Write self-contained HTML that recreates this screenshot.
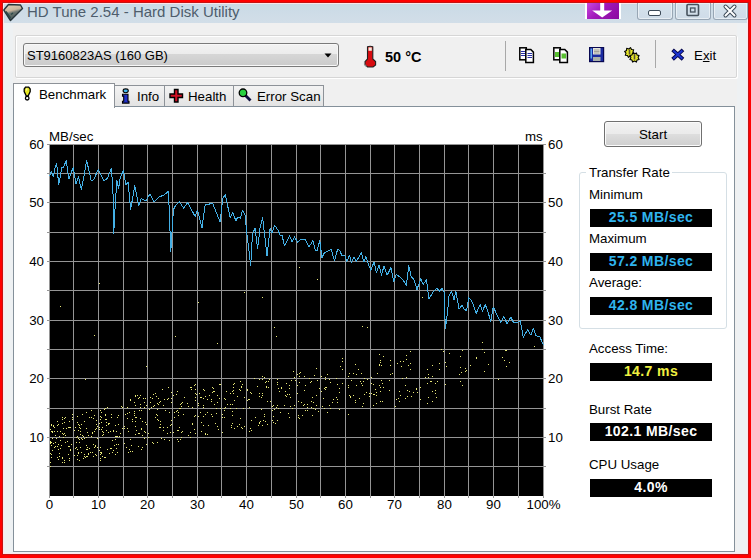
<!DOCTYPE html>
<html><head><meta charset="utf-8">
<style>
*{margin:0;padding:0;box-sizing:border-box}
html,body{width:751px;height:558px;overflow:hidden;background:#f00}
body{position:relative;font-family:"Liberation Sans",sans-serif;color:#000}
.a{position:absolute}
.t{white-space:nowrap;line-height:1}
#win{left:3px;top:3px;width:745px;height:551px;background:#eef1f3;box-shadow:inset 0 0 0 1px #ffe4ea,0 0 0 1px #c41414}
#title{left:4px;top:4px;width:743px;height:19px;background:linear-gradient(#cadae6,#d2dee8)}
#body{left:13px;top:23px;width:724px;height:529px;background:#f0f0f0}
#panel{left:13px;top:106px;width:722px;height:446px;background:#fff;border:1px solid #84909a}
.blk{background:#000;color:#fff;font-weight:bold;font-size:14px;letter-spacing:0.4px;text-align:center;line-height:16px;height:18px;width:122px;left:590px}
.lbl{font-size:13.3px;left:589px}
.ax{font-size:13.3px}
.tb{position:absolute;top:3px;height:17px;border:1px solid #98a6b4;border-top:none;border-radius:0 0 3px 3px;background:linear-gradient(#d6e2ec,#cfdce8);box-shadow:inset 0 0 0 1px rgba(255,255,255,.5)}
.tab{position:absolute;top:85px;height:21px;border:1px solid #8d9298;border-bottom:none;background:linear-gradient(#f3f3f3,#e3e3e3)}
</style></head><body>
<div id="win" class="a"></div>
<div id="title" class="a"></div>
<!-- app icon -->
<svg class="a" style="left:2px;top:2px" width="22" height="22" viewBox="0 0 22 22">
<defs><linearGradient id="ai" x1="0" y1="0" x2="0.3" y2="1"><stop offset="0" stop-color="#e8d2b8"/><stop offset=".45" stop-color="#c8b49c"/><stop offset=".6" stop-color="#6a7470"/><stop offset="1" stop-color="#4a5a5a"/></linearGradient></defs>
<polygon points="6.5,2.5 18.5,3 20.5,6.5 8.5,18.5 1.8,8" fill="url(#ai)" stroke="#26343a" stroke-width="1.4" stroke-linejoin="round"/>
<path d="M4 9.5l4.5 6.5M9 12.5l2 -1.5" stroke="#2c4a4a" stroke-width="1.4"/>
</svg>
<div class="a t" style="left:27px;top:4px;font-size:15px;color:#4e5d6c">HD Tune 2.54 - Hard Disk Utility</div>
<!-- purple button -->
<div class="a" style="left:585px;top:3px;width:36px;height:16px;background:#fff"></div>
<div class="a" style="left:587px;top:3px;width:32px;height:16px;background:linear-gradient(135deg,#c848e0,#a018b8 45%,#8a0aa0)"></div>
<svg class="a" style="left:587px;top:3px" width="32" height="16"><path d="M13.2 0h4v7.5h8l-10 7-10-7h8z" fill="#fff"/></svg>
<div class="tb" style="left:637px;width:36px"></div>
<div class="tb" style="left:675px;width:36px"></div>
<div class="tb" style="left:713px;width:35px"></div>
<svg class="a" style="left:637px;top:3px" width="111" height="17">
<rect x="11.5" y="7.5" width="12" height="5" rx="1.5" fill="#fff" stroke="#3c4a58"/>
<rect x="50" y="1.5" width="11.5" height="11" rx="1" fill="none" stroke="#46525e" stroke-width="1.6"/>
<rect x="53.5" y="5" width="4.5" height="4" fill="none" stroke="#46525e" stroke-width="1.3"/>
<path d="M88.5 3.5l9 9M97.5 3.5l-9 9" stroke="#3c4a58" stroke-width="4" stroke-linecap="round"/>
<path d="M88.5 3.5l9 9M97.5 3.5l-9 9" stroke="#fff" stroke-width="2" stroke-linecap="round"/>
</svg>
<div id="body" class="a"></div>
<!-- toolbar container -->
<div class="a" style="left:15px;top:35px;width:722px;height:43px;border:1px solid #d6d6d6;border-radius:2px;box-shadow:inset 1px 1px 0 #fff,1px 1px 0 #fff;background:#f0f0f0"></div>
<!-- combo -->
<div class="a" style="left:23px;top:43px;width:316px;height:24px;border:1px solid #7a7a7a;border-radius:3px;background:linear-gradient(#f2f2f2 0%,#ececec 45%,#d6d6d6 47%,#cbcbcb 100%);box-shadow:inset 0 0 0 1px #f8f8f8"></div>
<div class="a t" style="left:27px;top:49px;font-size:13px">ST9160823AS (160 GB)</div>
<svg class="a" style="left:324px;top:53px" width="10" height="6"><path d="M0.5 0.5h7l-3.5 4z" fill="#000"/></svg>
<!-- thermometer -->
<svg class="a" style="left:362px;top:45px" width="16" height="23" viewBox="0 0 16 23">
<path d="M5.5 1.8q2.7-1 5.3 0v12.2l2.8 2.6v3.4l-2.5 2h-5.6l-2.5-2.3v-3.1l2.5-2.6z" fill="#d80c10" stroke="#202020" stroke-width="1.1"/>
<path d="M6.5 2.4h3.3v3.4h-3.3z" fill="#f4ece0"/>
<path d="M2.5 16.5v3l2 2" stroke="#888" stroke-width="1.1" fill="none"/>
</svg>
<div class="a t" style="left:385px;top:50px;font-size:14.5px;font-weight:bold">50 °C</div>
<div class="a" style="left:505px;top:41px;width:1px;height:30px;background:#a8a8a8"></div>
<div class="a" style="left:655px;top:40px;width:1px;height:28px;background:#a8a8a8"></div>
<!-- copy icons -->
<svg class="a" style="left:516px;top:44px" width="128" height="22">
<g stroke="#000" stroke-width="1.5">
<rect x="3.8" y="3.8" width="6.5" height="12" fill="#fff"/>
<path d="M9.8 5.5h5l2.6 2.6v10.5h-7.6z" fill="#fff"/>
</g>
<path d="M5 7.5h4M5 9.5h4M5 11.5h4M11.5 9.5h4.5M11.5 11.5h4.5M11.5 13.5h4.5" stroke="#2830a8" stroke-width="1.1"/>
<g transform="translate(34,0)">
<g stroke="#000" stroke-width="1.5">
<rect x="3.8" y="3.8" width="6.5" height="12" fill="#fff"/>
<path d="M9.8 5.5h5l2.6 2.6v10.5h-7.6z" fill="#fff"/>
</g>
<rect x="5" y="8" width="4" height="5" fill="#58c030"/>
<rect x="11.5" y="9.5" width="4.5" height="5" fill="#58c030"/>
</g>
<g transform="translate(73,3)">
<rect x="0.6" y="0.6" width="14" height="14" fill="#1a2aa0" stroke="#080850" stroke-width="1.2"/>
<rect x="1.5" y="1.5" width="1.5" height="10" fill="#5aa8f0"/>
<rect x="4" y="1" width="7.5" height="6.5" fill="#e4e4dc"/>
<path d="M5 3h5.5M5 4.5h5.5M5 6h5.5" stroke="#909088" stroke-width=".8"/>
<rect x="4" y="10" width="7.5" height="4" fill="#a8b0a8"/>
</g>
<g transform="translate(107,3)">
<polygon points="11.4,6.5 9.5,7.5 9.3,9.7 7.2,9.0 5.5,10.4 4.5,8.5 2.3,8.3 3.0,6.2 1.6,4.5 3.5,3.5 3.7,1.3 5.8,2.0 7.5,0.6 8.5,2.5 10.7,2.7 10.0,4.8" fill="#e6e628" stroke="#000" stroke-width="1.1" stroke-linejoin="round"/>
<polygon points="16.1,12.4 14.0,13.1 13.4,15.1 11.5,14.1 9.6,15.1 8.9,13.0 6.9,12.4 7.9,10.5 6.9,8.6 9.0,7.9 9.6,5.9 11.5,6.9 13.4,5.9 14.1,8.0 16.1,8.6 15.1,10.5" fill="#e6e628" stroke="#000" stroke-width="1.1" stroke-linejoin="round"/>
<path d="M6.5 2.5v5M11.5 7.5v5" stroke="#5a5038" stroke-width="1.6"/>
</g>
</svg>
<!-- exit X -->
<svg class="a" style="left:670px;top:47px" width="16" height="14">
<path d="M4 4.2l7.6 6.8M11.6 4.2l-7.6 6.8" stroke="#06064a" stroke-width="3.8" stroke-linecap="square"/>
<path d="M4 4.2l7.6 6.8M11.6 4.2l-7.6 6.8" stroke="#1c34d0" stroke-width="2" stroke-linecap="square"/>
</svg>
<div class="a t" style="left:694px;top:49px;font-size:13.3px">E<u>x</u>it</div>

<!-- panel + tabs -->
<div id="panel" class="a"></div>
<div class="tab" style="left:114px;width:51px"></div>
<div class="tab" style="left:164px;width:70px"></div>
<div class="tab" style="left:233px;width:91px"></div>
<div class="a" style="left:13px;top:83px;width:102px;height:25px;background:#fff;border:1px solid #8d9298;border-bottom:none"></div>
<svg class="a" style="left:18px;top:84px" width="20" height="20">
<path d="M7.5 3.2h3.2l1.5 1.8v2.5l-2 4.3h-2l-2-4.3v-2.5z" fill="#e8e820" stroke="#000" stroke-width="1.3"/>
<path d="M8.2 4.5h1.2l-.6 3z" fill="#fff"/>
<circle cx="9.2" cy="14.2" r="1.8" fill="#fff" stroke="#000" stroke-width="1.3"/>
</svg>
<div class="a t" style="left:39px;top:88px;font-size:13.3px">Benchmark</div>
<svg class="a" style="left:118px;top:86px" width="16" height="18">
<ellipse cx="7.7" cy="4.8" rx="2.6" ry="1.9" fill="#40b8f0" stroke="#000" stroke-width="1.1"/>
<path d="M4.5 8.3h5.5v7h1v1.8h-6.5v-1.8h1.2v-5.2h-1.2z" fill="#2030c8" stroke="#000" stroke-width="1.1"/>
</svg>
<div class="a t" style="left:137px;top:90px;font-size:13.3px">Info</div>
<svg class="a" style="left:166px;top:86px" width="20" height="18">
<path d="M8.5 3.5h3.5v4.5h4.5v3.5h-4.5v4.5h-3.5v-4.5h-4.5v-3.5h4.5z" fill="#d01024" stroke="#000" stroke-width="1.4"/>
</svg>
<div class="a t" style="left:188px;top:90px;font-size:13.3px">Health</div>
<svg class="a" style="left:236px;top:86px" width="20" height="18">
<path d="M9.5 9.5l5 5" stroke="#101040" stroke-width="2.8"/>
<circle cx="7" cy="6.8" r="3.8" fill="#28d040" stroke="#000" stroke-width="1.3"/>
</svg>
<div class="a t" style="left:257px;top:90px;font-size:13.3px">Error Scan</div>

<!-- start button -->
<div class="a" style="left:604px;top:121px;width:98px;height:26px;border:1px solid #707070;border-radius:3px;background:linear-gradient(#f2f2f2 0%,#ebebeb 48%,#dddddd 52%,#cfcfcf 100%);box-shadow:inset 0 0 0 1px #fbfbfb"></div>
<div class="a t" style="left:639px;top:127.5px;font-size:13.3px">Start</div>
<!-- group box -->
<div class="a" style="left:579px;top:172px;width:148px;height:157px;border:1px solid #d5dfe5;border-radius:3px"></div>
<div class="a" style="left:586px;top:165px;width:86px;height:14px;background:#fff"></div>

<div class="a lbl t" style="top:165.5px">Transfer Rate</div>
<div class="a lbl t" style="top:188px">Minimum</div>
<div class="a blk t" style="top:209px;color:#2fb4ee">25.5 MB/sec</div>
<div class="a lbl t" style="top:232px">Maximum</div>
<div class="a blk t" style="top:253px;color:#2fb4ee">57.2 MB/sec</div>
<div class="a lbl t" style="top:276px">Average:</div>
<div class="a blk t" style="top:297px;color:#2fb4ee">42.8 MB/sec</div>
<div class="a lbl t" style="top:342px">Access Time:</div>
<div class="a blk t" style="top:363px;color:#f0f040">14.7 ms</div>
<div class="a lbl t" style="top:403px">Burst Rate</div>
<div class="a blk t" style="top:423px">102.1 MB/sec</div>
<div class="a lbl t" style="top:458px">CPU Usage</div>
<div class="a blk t" style="top:479px">4.0%</div>

<!-- axis labels -->
<div class="a ax t" style="left:49px;top:130px">MB/sec</div>
<div class="a ax t" style="left:525px;top:130px">ms</div>
<div class="a ax t" style="right:707px;top:137.5px;text-align:right">60</div>
<div class="a ax t" style="left:548px;top:137.5px">60</div>
<div class="a ax t" style="right:707px;top:195.5px;text-align:right">50</div>
<div class="a ax t" style="left:548px;top:195.5px">50</div>
<div class="a ax t" style="right:707px;top:254.5px;text-align:right">40</div>
<div class="a ax t" style="left:548px;top:254.5px">40</div>
<div class="a ax t" style="right:707px;top:313.5px;text-align:right">30</div>
<div class="a ax t" style="left:548px;top:313.5px">30</div>
<div class="a ax t" style="right:707px;top:371.5px;text-align:right">20</div>
<div class="a ax t" style="left:548px;top:371.5px">20</div>
<div class="a ax t" style="right:707px;top:430.5px;text-align:right">10</div>
<div class="a ax t" style="left:548px;top:430.5px">10</div>
<div class="a ax t" style="left:-50.5px;width:200px;text-align:center;top:498px">0</div>
<div class="a ax t" style="left:-1.5px;width:200px;text-align:center;top:498px">10</div>
<div class="a ax t" style="left:47.5px;width:200px;text-align:center;top:498px">20</div>
<div class="a ax t" style="left:97.5px;width:200px;text-align:center;top:498px">30</div>
<div class="a ax t" style="left:146.5px;width:200px;text-align:center;top:498px">40</div>
<div class="a ax t" style="left:196.5px;width:200px;text-align:center;top:498px">50</div>
<div class="a ax t" style="left:245.5px;width:200px;text-align:center;top:498px">60</div>
<div class="a ax t" style="left:294.5px;width:200px;text-align:center;top:498px">70</div>
<div class="a ax t" style="left:344.5px;width:200px;text-align:center;top:498px">80</div>
<div class="a ax t" style="left:393.5px;width:200px;text-align:center;top:498px">90</div>
<div class="a ax t" style="left:443.5px;width:200px;text-align:center;top:498px">100%</div>
<svg class="a" style="left:0;top:0" width="751" height="558" shape-rendering="crispEdges">
<rect x="50" y="145" width="493" height="351" fill="#000"/>
<path d="M73.5 144V498M98.5 144V498M123.5 144V498M147.5 144V498M172.5 144V498M197.5 144V498M221.5 144V498M246.5 144V498M271.5 144V498M296.5 144V498M320.5 144V498M345.5 144V498M370.5 144V498M394.5 144V498M419.5 144V498M444.5 144V498M468.5 144V498M493.5 144V498M518.5 144V498M47 173.5H546M47 202.5H546M47 232.5H546M47 261.5H546M47 290.5H546M47 320.5H546M47 349.5H546M47 378.5H546M47 408.5H546M47 437.5H546M47 466.5H546M49.5 144V498M543.5 144V498M47 144.5H546" stroke="#959595" stroke-width="1" fill="none"/>
<path d="M50 429h1v1h-1zM50 441h1v1h-1zM50 442h1v1h-1zM50 443h1v1h-1zM50 453h1v1h-1zM50 462h1v1h-1zM50 466h1v1h-1zM51 424h1v1h-1zM51 425h1v1h-1zM51 431h1v1h-1zM51 442h1v1h-1zM51 445h1v1h-1zM51 454h1v1h-1zM51 457h1v1h-1zM52 431h1v1h-1zM52 432h1v1h-1zM52 438h1v1h-1zM52 450h1v1h-1zM53 425h1v1h-1zM53 426h1v1h-1zM53 443h1v1h-1zM54 427h1v1h-1zM54 431h1v1h-1zM54 447h1v1h-1zM55 435h1v1h-1zM55 442h1v1h-1zM55 446h1v1h-1zM56 438h1v1h-1zM57 421h1v1h-1zM57 425h1v1h-1zM57 431h1v1h-1zM57 446h1v1h-1zM57 457h1v1h-1zM58 424h1v1h-1zM58 444h1v1h-1zM58 449h1v1h-1zM58 459h1v1h-1zM59 436h1v1h-1zM59 453h1v1h-1zM59 456h1v1h-1zM60 306h1v1h-1zM60 431h1v1h-1zM60 440h1v1h-1zM60 448h1v1h-1zM61 445h1v1h-1zM62 417h1v1h-1zM62 419h1v1h-1zM62 423h1v1h-1zM62 433h1v1h-1zM62 457h1v1h-1zM62 458h1v1h-1zM62 462h1v1h-1zM63 428h1v1h-1zM63 434h1v1h-1zM63 437h1v1h-1zM64 418h1v1h-1zM64 422h1v1h-1zM64 433h1v1h-1zM64 460h1v1h-1zM64 462h1v1h-1zM65 417h1v1h-1zM65 435h1v1h-1zM65 442h1v1h-1zM66 428h1v1h-1zM67 441h1v1h-1zM68 427h1v1h-1zM68 446h1v1h-1zM68 454h1v1h-1zM69 421h1v1h-1zM69 427h1v1h-1zM69 446h1v1h-1zM69 458h1v1h-1zM69 460h1v1h-1zM70 427h1v1h-1zM70 449h1v1h-1zM70 450h1v1h-1zM71 444h1v1h-1zM72 414h1v1h-1zM72 417h1v1h-1zM72 419h1v1h-1zM74 430h1v1h-1zM74 455h1v1h-1zM75 427h1v1h-1zM75 448h1v1h-1zM76 437h1v1h-1zM76 442h1v1h-1zM76 447h1v1h-1zM77 416h1v1h-1zM77 422h1v1h-1zM77 436h1v1h-1zM77 449h1v1h-1zM77 455h1v1h-1zM77 459h1v1h-1zM78 424h1v1h-1zM78 430h1v1h-1zM78 438h1v1h-1zM78 452h1v1h-1zM78 453h1v1h-1zM79 425h1v1h-1zM79 427h1v1h-1zM79 439h1v1h-1zM79 442h1v1h-1zM79 460h1v1h-1zM80 428h1v1h-1zM80 431h1v1h-1zM80 434h1v1h-1zM80 447h1v1h-1zM81 424h1v1h-1zM81 438h1v1h-1zM81 452h1v1h-1zM82 414h1v1h-1zM82 435h1v1h-1zM82 439h1v1h-1zM83 436h1v1h-1zM83 458h1v1h-1zM84 421h1v1h-1zM84 438h1v1h-1zM84 454h1v1h-1zM84 456h1v1h-1zM85 379h1v1h-1zM85 457h1v1h-1zM86 412h1v1h-1zM86 428h1v1h-1zM86 437h1v1h-1zM86 445h1v1h-1zM86 449h1v1h-1zM86 456h1v1h-1zM87 432h1v1h-1zM87 447h1v1h-1zM87 449h1v1h-1zM87 456h1v1h-1zM88 435h1v1h-1zM88 453h1v1h-1zM88 454h1v1h-1zM89 417h1v1h-1zM89 448h1v1h-1zM90 452h1v1h-1zM91 410h1v1h-1zM91 417h1v1h-1zM91 436h1v1h-1zM92 432h1v1h-1zM92 433h1v1h-1zM92 452h1v1h-1zM93 418h1v1h-1zM93 444h1v1h-1zM93 456h1v1h-1zM94 335h1v1h-1zM94 415h1v1h-1zM94 431h1v1h-1zM94 447h1v1h-1zM95 429h1v1h-1zM95 445h1v1h-1zM95 446h1v1h-1zM95 454h1v1h-1zM96 420h1v1h-1zM96 424h1v1h-1zM96 428h1v1h-1zM96 455h1v1h-1zM97 426h1v1h-1zM97 438h1v1h-1zM97 447h1v1h-1zM99 283h1v1h-1zM99 423h1v1h-1zM99 427h1v1h-1zM99 429h1v1h-1zM99 450h1v1h-1zM100 410h1v1h-1zM100 416h1v1h-1zM100 419h1v1h-1zM100 447h1v1h-1zM100 452h1v1h-1zM100 454h1v1h-1zM100 458h1v1h-1zM100 460h1v1h-1zM101 412h1v1h-1zM101 417h1v1h-1zM101 422h1v1h-1zM101 429h1v1h-1zM101 452h1v1h-1zM101 453h1v1h-1zM102 427h1v1h-1zM102 431h1v1h-1zM102 435h1v1h-1zM102 456h1v1h-1zM103 432h1v1h-1zM103 434h1v1h-1zM104 409h1v1h-1zM104 457h1v1h-1zM105 408h1v1h-1zM105 414h1v1h-1zM105 415h1v1h-1zM105 419h1v1h-1zM105 457h1v1h-1zM106 419h1v1h-1zM106 422h1v1h-1zM106 425h1v1h-1zM106 430h1v1h-1zM107 407h1v1h-1zM107 449h1v1h-1zM108 423h1v1h-1zM108 424h1v1h-1zM108 432h1v1h-1zM109 423h1v1h-1zM109 453h1v1h-1zM110 431h1v1h-1zM110 448h1v1h-1zM111 414h1v1h-1zM111 417h1v1h-1zM111 448h1v1h-1zM112 440h1v1h-1zM112 452h1v1h-1zM113 430h1v1h-1zM113 431h1v1h-1zM113 450h1v1h-1zM114 445h1v1h-1zM115 425h1v1h-1zM115 436h1v1h-1zM115 439h1v1h-1zM115 454h1v1h-1zM116 431h1v1h-1zM116 436h1v1h-1zM116 444h1v1h-1zM116 448h1v1h-1zM117 417h1v1h-1zM117 436h1v1h-1zM117 452h1v1h-1zM118 415h1v1h-1zM118 424h1v1h-1zM118 444h1v1h-1zM119 436h1v1h-1zM120 433h1v1h-1zM121 406h1v1h-1zM122 407h1v1h-1zM122 428h1v1h-1zM124 426h1v1h-1zM124 428h1v1h-1zM124 443h1v1h-1zM125 414h1v1h-1zM126 447h1v1h-1zM127 407h1v1h-1zM127 413h1v1h-1zM127 418h1v1h-1zM127 428h1v1h-1zM128 431h1v1h-1zM128 452h1v1h-1zM129 412h1v1h-1zM129 449h1v1h-1zM130 399h1v1h-1zM130 400h1v1h-1zM130 439h1v1h-1zM130 451h1v1h-1zM131 445h1v1h-1zM132 419h1v1h-1zM132 421h1v1h-1zM132 451h1v1h-1zM134 402h1v1h-1zM134 411h1v1h-1zM134 413h1v1h-1zM134 415h1v1h-1zM135 395h1v1h-1zM135 396h1v1h-1zM135 405h1v1h-1zM135 417h1v1h-1zM135 421h1v1h-1zM135 426h1v1h-1zM135 434h1v1h-1zM136 417h1v1h-1zM136 430h1v1h-1zM137 395h1v1h-1zM138 398h1v1h-1zM138 433h1v1h-1zM138 446h1v1h-1zM139 397h1v1h-1zM139 410h1v1h-1zM139 433h1v1h-1zM140 395h1v1h-1zM140 404h1v1h-1zM140 407h1v1h-1zM140 418h1v1h-1zM141 410h1v1h-1zM141 428h1v1h-1zM141 429h1v1h-1zM141 449h1v1h-1zM142 421h1v1h-1zM142 435h1v1h-1zM142 447h1v1h-1zM143 398h1v1h-1zM144 402h1v1h-1zM144 407h1v1h-1zM144 431h1v1h-1zM144 438h1v1h-1zM145 398h1v1h-1zM145 422h1v1h-1zM145 432h1v1h-1zM146 366h1v1h-1zM146 405h1v1h-1zM146 424h1v1h-1zM146 444h1v1h-1zM148 433h1v1h-1zM148 437h1v1h-1zM149 409h1v1h-1zM150 397h1v1h-1zM150 402h1v1h-1zM151 407h1v1h-1zM152 398h1v1h-1zM152 442h1v1h-1zM153 394h1v1h-1zM153 406h1v1h-1zM153 443h1v1h-1zM154 405h1v1h-1zM155 393h1v1h-1zM155 417h1v1h-1zM156 396h1v1h-1zM156 414h1v1h-1zM157 403h1v1h-1zM157 409h1v1h-1zM157 415h1v1h-1zM157 419h1v1h-1zM157 442h1v1h-1zM158 398h1v1h-1zM158 404h1v1h-1zM158 420h1v1h-1zM159 402h1v1h-1zM159 427h1v1h-1zM160 401h1v1h-1zM160 421h1v1h-1zM160 424h1v1h-1zM160 427h1v1h-1zM161 438h1v1h-1zM162 389h1v1h-1zM163 405h1v1h-1zM163 427h1v1h-1zM163 430h1v1h-1zM164 399h1v1h-1zM164 439h1v1h-1zM165 410h1v1h-1zM167 399h1v1h-1zM167 427h1v1h-1zM167 433h1v1h-1zM168 387h1v1h-1zM168 398h1v1h-1zM169 412h1v1h-1zM169 440h1v1h-1zM170 425h1v1h-1zM170 432h1v1h-1zM171 392h1v1h-1zM171 398h1v1h-1zM171 402h1v1h-1zM171 420h1v1h-1zM171 424h1v1h-1zM173 395h1v1h-1zM173 432h1v1h-1zM174 412h1v1h-1zM174 417h1v1h-1zM175 336h1v1h-1zM176 394h1v1h-1zM176 411h1v1h-1zM177 391h1v1h-1zM177 410h1v1h-1zM177 430h1v1h-1zM177 439h1v1h-1zM178 412h1v1h-1zM178 415h1v1h-1zM178 430h1v1h-1zM178 441h1v1h-1zM179 408h1v1h-1zM179 427h1v1h-1zM180 404h1v1h-1zM180 408h1v1h-1zM180 439h1v1h-1zM181 403h1v1h-1zM181 406h1v1h-1zM181 432h1v1h-1zM181 437h1v1h-1zM182 402h1v1h-1zM182 431h1v1h-1zM183 414h1v1h-1zM184 397h1v1h-1zM187 403h1v1h-1zM188 406h1v1h-1zM188 435h1v1h-1zM190 387h1v1h-1zM190 432h1v1h-1zM190 437h1v1h-1zM191 387h1v1h-1zM191 389h1v1h-1zM192 407h1v1h-1zM192 423h1v1h-1zM192 424h1v1h-1zM194 385h1v1h-1zM194 416h1v1h-1zM194 429h1v1h-1zM195 384h1v1h-1zM195 389h1v1h-1zM195 393h1v1h-1zM195 397h1v1h-1zM195 400h1v1h-1zM195 415h1v1h-1zM195 433h1v1h-1zM196 394h1v1h-1zM198 302h1v1h-1zM198 403h1v1h-1zM198 405h1v1h-1zM198 416h1v1h-1zM199 393h1v1h-1zM200 397h1v1h-1zM200 412h1v1h-1zM201 397h1v1h-1zM201 422h1v1h-1zM201 431h1v1h-1zM203 389h1v1h-1zM203 398h1v1h-1zM203 405h1v1h-1zM203 407h1v1h-1zM203 416h1v1h-1zM203 425h1v1h-1zM204 390h1v1h-1zM205 396h1v1h-1zM205 414h1v1h-1zM205 433h1v1h-1zM205 434h1v1h-1zM207 399h1v1h-1zM207 412h1v1h-1zM207 434h1v1h-1zM208 425h1v1h-1zM209 395h1v1h-1zM211 399h1v1h-1zM211 401h1v1h-1zM211 414h1v1h-1zM212 387h1v1h-1zM212 392h1v1h-1zM212 416h1v1h-1zM213 388h1v1h-1zM213 391h1v1h-1zM214 391h1v1h-1zM214 404h1v1h-1zM215 423h1v1h-1zM216 408h1v1h-1zM216 413h1v1h-1zM217 343h1v1h-1zM217 395h1v1h-1zM217 402h1v1h-1zM217 426h1v1h-1zM218 429h1v1h-1zM219 384h1v1h-1zM219 398h1v1h-1zM220 384h1v1h-1zM220 408h1v1h-1zM222 414h1v1h-1zM222 417h1v1h-1zM222 432h1v1h-1zM224 398h1v1h-1zM224 408h1v1h-1zM224 410h1v1h-1zM224 417h1v1h-1zM225 399h1v1h-1zM225 407h1v1h-1zM226 391h1v1h-1zM227 404h1v1h-1zM230 393h1v1h-1zM230 404h1v1h-1zM230 408h1v1h-1zM231 425h1v1h-1zM231 427h1v1h-1zM232 391h1v1h-1zM232 404h1v1h-1zM232 411h1v1h-1zM232 415h1v1h-1zM232 423h1v1h-1zM233 384h1v1h-1zM233 387h1v1h-1zM233 390h1v1h-1zM233 393h1v1h-1zM234 383h1v1h-1zM234 400h1v1h-1zM234 428h1v1h-1zM236 408h1v1h-1zM237 396h1v1h-1zM237 426h1v1h-1zM239 389h1v1h-1zM239 424h1v1h-1zM240 381h1v1h-1zM240 390h1v1h-1zM240 418h1v1h-1zM241 386h1v1h-1zM241 387h1v1h-1zM241 427h1v1h-1zM242 384h1v1h-1zM242 428h1v1h-1zM243 408h1v1h-1zM244 292h1v1h-1zM244 397h1v1h-1zM244 426h1v1h-1zM247 389h1v1h-1zM247 390h1v1h-1zM247 400h1v1h-1zM248 399h1v1h-1zM249 399h1v1h-1zM249 407h1v1h-1zM249 431h1v1h-1zM250 392h1v1h-1zM250 428h1v1h-1zM251 393h1v1h-1zM251 420h1v1h-1zM251 430h1v1h-1zM254 378h1v1h-1zM255 417h1v1h-1zM257 386h1v1h-1zM258 425h1v1h-1zM259 379h1v1h-1zM259 393h1v1h-1zM259 396h1v1h-1zM259 422h1v1h-1zM259 423h1v1h-1zM260 421h1v1h-1zM261 397h1v1h-1zM261 409h1v1h-1zM262 297h1v1h-1zM262 376h1v1h-1zM262 379h1v1h-1zM262 393h1v1h-1zM262 395h1v1h-1zM262 425h1v1h-1zM263 420h1v1h-1zM264 377h1v1h-1zM264 414h1v1h-1zM264 416h1v1h-1zM265 382h1v1h-1zM265 421h1v1h-1zM266 381h1v1h-1zM266 386h1v1h-1zM266 387h1v1h-1zM267 401h1v1h-1zM267 424h1v1h-1zM268 381h1v1h-1zM268 387h1v1h-1zM269 379h1v1h-1zM270 401h1v1h-1zM272 406h1v1h-1zM272 410h1v1h-1zM272 420h1v1h-1zM273 405h1v1h-1zM273 416h1v1h-1zM273 422h1v1h-1zM274 327h1v1h-1zM274 409h1v1h-1zM275 423h1v1h-1zM276 336h1v1h-1zM276 407h1v1h-1zM277 379h1v1h-1zM277 382h1v1h-1zM277 384h1v1h-1zM277 405h1v1h-1zM277 420h1v1h-1zM278 388h1v1h-1zM278 408h1v1h-1zM279 391h1v1h-1zM280 412h1v1h-1zM281 387h1v1h-1zM281 388h1v1h-1zM284 405h1v1h-1zM285 391h1v1h-1zM285 395h1v1h-1zM286 383h1v1h-1zM286 396h1v1h-1zM287 394h1v1h-1zM288 413h1v1h-1zM289 385h1v1h-1zM289 388h1v1h-1zM289 394h1v1h-1zM289 417h1v1h-1zM290 397h1v1h-1zM290 406h1v1h-1zM291 380h1v1h-1zM292 408h1v1h-1zM293 371h1v1h-1zM294 377h1v1h-1zM294 405h1v1h-1zM295 380h1v1h-1zM297 374h1v1h-1zM297 385h1v1h-1zM297 393h1v1h-1zM298 401h1v1h-1zM298 415h1v1h-1zM298 417h1v1h-1zM299 267h1v1h-1zM299 373h1v1h-1zM299 376h1v1h-1zM299 382h1v1h-1zM299 418h1v1h-1zM300 372h1v1h-1zM301 402h1v1h-1zM302 415h1v1h-1zM303 405h1v1h-1zM304 376h1v1h-1zM304 390h1v1h-1zM304 404h1v1h-1zM305 385h1v1h-1zM305 410h1v1h-1zM307 404h1v1h-1zM307 407h1v1h-1zM307 410h1v1h-1zM309 378h1v1h-1zM310 382h1v1h-1zM311 381h1v1h-1zM311 401h1v1h-1zM311 407h1v1h-1zM312 397h1v1h-1zM312 415h1v1h-1zM313 402h1v1h-1zM313 408h1v1h-1zM314 375h1v1h-1zM315 409h1v1h-1zM316 368h1v1h-1zM316 395h1v1h-1zM316 405h1v1h-1zM317 279h1v1h-1zM317 380h1v1h-1zM318 411h1v1h-1zM319 388h1v1h-1zM321 376h1v1h-1zM321 391h1v1h-1zM322 406h1v1h-1zM323 398h1v1h-1zM324 388h1v1h-1zM324 408h1v1h-1zM325 377h1v1h-1zM325 379h1v1h-1zM325 387h1v1h-1zM325 389h1v1h-1zM326 387h1v1h-1zM327 374h1v1h-1zM327 412h1v1h-1zM329 379h1v1h-1zM329 405h1v1h-1zM330 382h1v1h-1zM330 408h1v1h-1zM332 402h1v1h-1zM333 399h1v1h-1zM336 378h1v1h-1zM336 397h1v1h-1zM337 384h1v1h-1zM337 399h1v1h-1zM337 402h1v1h-1zM339 388h1v1h-1zM339 392h1v1h-1zM339 409h1v1h-1zM340 366h1v1h-1zM342 358h1v1h-1zM342 361h1v1h-1zM342 369h1v1h-1zM342 383h1v1h-1zM348 376h1v1h-1zM348 385h1v1h-1zM348 387h1v1h-1zM348 414h1v1h-1zM349 373h1v1h-1zM349 395h1v1h-1zM350 396h1v1h-1zM350 397h1v1h-1zM351 380h1v1h-1zM353 373h1v1h-1zM353 395h1v1h-1zM355 364h1v1h-1zM355 400h1v1h-1zM355 402h1v1h-1zM356 374h1v1h-1zM356 385h1v1h-1zM358 369h1v1h-1zM359 398h1v1h-1zM360 381h1v1h-1zM361 373h1v1h-1zM361 383h1v1h-1zM362 326h1v1h-1zM362 385h1v1h-1zM362 406h1v1h-1zM363 381h1v1h-1zM363 403h1v1h-1zM364 378h1v1h-1zM364 394h1v1h-1zM366 392h1v1h-1zM367 327h1v1h-1zM367 379h1v1h-1zM369 393h1v1h-1zM369 396h1v1h-1zM371 377h1v1h-1zM371 383h1v1h-1zM371 393h1v1h-1zM373 384h1v1h-1zM373 394h1v1h-1zM373 405h1v1h-1zM374 394h1v1h-1zM375 389h1v1h-1zM376 392h1v1h-1zM376 395h1v1h-1zM376 403h1v1h-1zM377 373h1v1h-1zM379 354h1v1h-1zM379 364h1v1h-1zM379 365h1v1h-1zM379 385h1v1h-1zM380 360h1v1h-1zM380 362h1v1h-1zM380 387h1v1h-1zM380 391h1v1h-1zM380 401h1v1h-1zM381 365h1v1h-1zM381 380h1v1h-1zM382 383h1v1h-1zM382 401h1v1h-1zM383 356h1v1h-1zM383 387h1v1h-1zM389 380h1v1h-1zM389 390h1v1h-1zM390 360h1v1h-1zM390 365h1v1h-1zM390 374h1v1h-1zM392 373h1v1h-1zM395 406h1v1h-1zM396 399h1v1h-1zM397 363h1v1h-1zM398 398h1v1h-1zM399 391h1v1h-1zM399 401h1v1h-1zM400 361h1v1h-1zM400 395h1v1h-1zM401 366h1v1h-1zM402 378h1v1h-1zM403 361h1v1h-1zM405 385h1v1h-1zM405 398h1v1h-1zM406 355h1v1h-1zM406 359h1v1h-1zM406 377h1v1h-1zM407 390h1v1h-1zM407 396h1v1h-1zM408 365h1v1h-1zM409 391h1v1h-1zM410 351h1v1h-1zM410 363h1v1h-1zM410 369h1v1h-1zM411 396h1v1h-1zM413 392h1v1h-1zM416 388h1v1h-1zM416 389h1v1h-1zM417 392h1v1h-1zM420 387h1v1h-1zM420 399h1v1h-1zM422 297h1v1h-1zM425 377h1v1h-1zM427 369h1v1h-1zM427 383h1v1h-1zM427 403h1v1h-1zM428 374h1v1h-1zM428 377h1v1h-1zM428 397h1v1h-1zM430 381h1v1h-1zM431 381h1v1h-1zM432 365h1v1h-1zM432 376h1v1h-1zM432 391h1v1h-1zM432 401h1v1h-1zM435 383h1v1h-1zM435 390h1v1h-1zM435 393h1v1h-1zM436 397h1v1h-1zM437 381h1v1h-1zM439 363h1v1h-1zM439 369h1v1h-1zM441 349h1v1h-1zM443 351h1v1h-1zM445 362h1v1h-1zM445 384h1v1h-1zM446 366h1v1h-1zM449 353h1v1h-1zM459 374h1v1h-1zM460 356h1v1h-1zM460 367h1v1h-1zM460 381h1v1h-1zM461 372h1v1h-1zM462 350h1v1h-1zM462 385h1v1h-1zM465 368h1v1h-1zM465 371h1v1h-1zM466 370h1v1h-1zM470 365h1v1h-1zM476 357h1v1h-1zM476 358h1v1h-1zM482 342h1v1h-1zM482 349h1v1h-1zM484 352h1v1h-1zM484 371h1v1h-1zM488 364h1v1h-1zM498 379h1v1h-1zM502 357h1v1h-1zM504 360h1v1h-1zM505 350h1v1h-1zM506 350h1v1h-1zM506 366h1v1h-1zM509 362h1v1h-1zM534 346h1v1h-1z" fill="#e8e878"/>
<path d="M49.8 175.8 51.4 171.0 53.4 176.6 55.0 167.7 56.7 163.3 58.7 184.7 61.9 167.7 63.5 167.0 66.3 160.5 68.8 179.0 73.2 167.3 76.0 183.9 78.4 176.6 81.3 189.5 84.5 173.4 86.5 160.5 88.5 168.5 91.3 181.0 93.8 179.8 98.2 169.4 104.0 180.8 107.3 178.4 111.3 168.7 112.9 187.3 113.7 234.0 115.3 203.4 116.9 180.8 118.5 188.9 120.2 177.6 123.4 170.3 125.8 184.8 128.2 182.4 130.6 209.8 134.7 185.6 138.7 205.8 141.1 198.5 146.0 201.0 150.0 193.7 154.0 201.8 158.9 196.9 163.7 195.3 168.5 191.3 170.8 251.5 173.4 209.8 175.8 205.0 179.4 202.0 183.8 208.2 187.5 202.6 195.1 216.4 197.6 210.1 202.0 227.7 205.1 205.1 207.6 204.5 212.6 203.2 220.2 222.0 222.7 198.8 225.2 194.4 230.2 217.6 232.7 212.6 235.9 220.8 237.7 217.0 240.2 218.3 242.5 210.6 245.0 215.0 246.9 233.9 250.7 265.2 252.5 233.9 255.1 228.2 257.6 248.9 260.1 227.6 262.6 217.5 267.0 255.8 270.1 228.2 272.0 233.2 274.5 225.1 277.6 229.5 280.2 235.1 282.0 235.1 284.5 245.8 289.6 235.7 292.1 242.0 294.6 237.0 297.7 242.6 300.2 239.5 305.2 239.5 309.0 247.0 312.8 240.8 315.3 250.2 317.2 250.2 319.8 240.7 321.9 257.6 324.4 252.6 327.5 251.3 331.3 249.5 334.4 260.8 337.6 249.5 339.5 250.1 342.0 255.7 344.5 255.1 347.0 261.4 349.5 255.1 351.4 262.6 353.9 257.0 356.4 261.4 361.4 252.6 363.9 262.0 365.8 256.4 367.7 262.6 370.8 270.2 374.0 262.0 376.5 272.7 379.0 265.2 381.5 275.2 384.0 265.8 387.1 275.2 390.9 267.7 393.8 282.0 396.3 274.4 400.0 277.0 403.2 280.1 406.3 285.7 408.8 265.7 411.3 277.0 413.8 279.5 417.0 289.5 420.7 278.8 423.2 284.5 426.4 279.5 428.9 298.9 432.7 292.6 437.0 288.2 439.6 291.4 442.1 288.2 444.0 291.4 445.4 329.0 447.7 310.2 449.0 296.4 451.5 291.4 454.0 299.5 455.9 291.4 459.0 309.0 462.1 305.2 464.0 309.0 466.5 310.8 468.8 297.6 471.9 301.3 476.3 313.2 480.1 304.5 482.6 311.4 485.1 304.5 487.6 310.1 490.7 322.0 493.2 307.0 495.7 312.0 500.8 322.7 503.9 316.4 507.0 323.9 510.8 317.0 513.3 322.0 517.1 322.7 520.2 320.8 523.3 337.1 527.7 329.6 530.9 335.2 533.4 328.3 535.9 335.8 539.7 336.5 543.4 345.2" stroke="#44b0e6" stroke-width="1" fill="none" shape-rendering="crispEdges" stroke-linejoin="round"/>
</svg>
</body></html>
